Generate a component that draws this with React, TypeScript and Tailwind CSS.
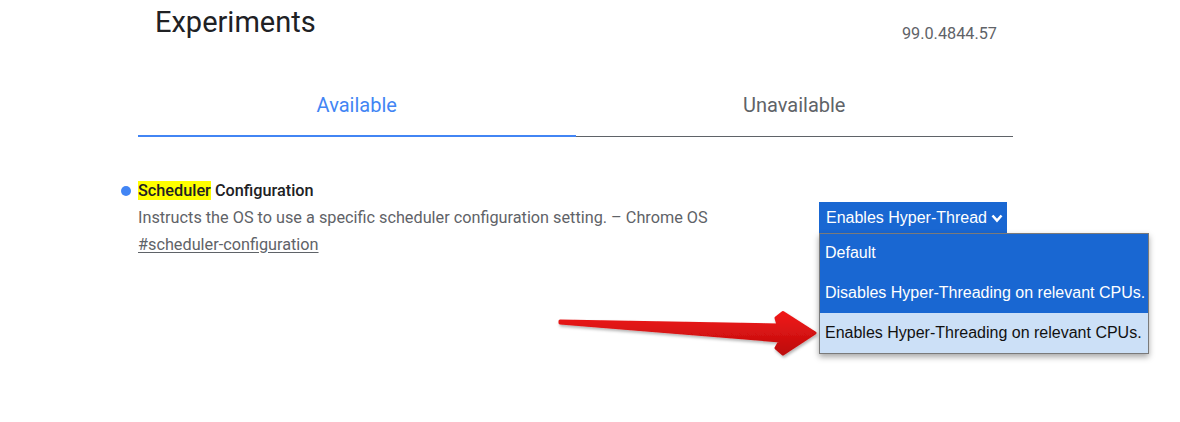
import React from "react";

export default function App() {
  return (
    <div
      className="relative w-[1180px] h-[422px] overflow-hidden bg-white"
      style={{ fontFamily: "Roboto, 'Noto Sans', sans-serif" }}
    >
      <div className="ml-[138px] w-[875px]">
        {/* Header */}
        <div className="flex items-start justify-between">
          <h1 className="pl-[17px] pt-[4px] text-[29px] leading-[36px] font-normal text-[#202124]">
            Experiments
          </h1>
          <div className="mt-[24px] pr-[16px] text-[16.25px] leading-[20px] text-[#5f6368]">
            99.0.4844.57
          </div>
        </div>

        {/* Tabs */}
        <div className="mt-[38px] flex">
          <div className="flex-1 border-b-2 border-[#4285f4] pt-[11px] pb-[18px] text-center text-[20px] leading-[24px] text-[#4285f4]">
            Available
          </div>
          <div className="flex-1 border-b border-[#5f6368] pt-[11px] pb-[19px] text-center text-[20px] leading-[24px] text-[#5f6368]">
            Unavailable
          </div>
        </div>

        {/* Experiment row */}
        <div className="mt-[44px] flex justify-between">
          <div className="flex flex-col">
            <div className="flex items-center text-[16.25px] leading-[20px] font-medium text-[#202124]">
              <span className="-ml-[17px] mr-[7px] inline-block h-[10px] w-[10px] rounded-full bg-[#4285f4]" />
              <span>
                <mark className="bg-[#ffff00] text-[#202124]">Scheduler</mark> Configuration
              </span>
            </div>
            <div className="mt-[7px] text-[16.25px] leading-[20px] text-[#5f6368]">
              Instructs the OS to use a specific scheduler configuration setting. – Chrome OS
            </div>
            <div className="mt-[7px] text-[16.25px] leading-[20px] text-[#5f6368] underline underline-offset-2">
              #scheduler-configuration
            </div>
          </div>

          <div className="relative mr-[6px] pt-[21px]">
            <div
              className="flex h-[32px] w-[188px] items-center justify-between bg-[#1967d2] pl-[7px] pr-[4px] text-[16px] text-white"
              style={{ fontFamily: "'Liberation Sans', Arial, sans-serif" }}
            >
              <span className="overflow-hidden whitespace-nowrap">Enables Hyper-Thread</span>
              <svg width="12" height="9" viewBox="0 0 12 9" className="shrink-0">
                <path d="M1.5 1.5 L6 6.5 L10.5 1.5" fill="none" stroke="white" strokeWidth="2.6" />
              </svg>
            </div>
            <div
              className="absolute left-0 top-[52px] z-10 w-[330px] border border-[#7a7a7a] bg-[#1967d2] text-[16px] whitespace-nowrap shadow-[0_3px_6px_rgba(0,0,0,0.35)]"
              style={{ fontFamily: "'Liberation Sans', Arial, sans-serif" }}
            >
              <div className="flex h-[38px] items-center px-[5px] text-white">Default</div>
              <div className="flex h-[41px] items-center px-[5px] text-white">
                Disables Hyper-Threading on relevant CPUs.
              </div>
              <div className="flex h-[40px] items-center bg-[#cce0f7] px-[5px] text-[#111]">
                Enables Hyper-Threading on relevant CPUs.
              </div>
            </div>
          </div>
        </div>
      </div>

      {/* Annotation arrow */}
      <svg
        className="pointer-events-none absolute left-0 top-0"
        width="1180"
        height="422"
        viewBox="0 0 1180 422"
      >
        <defs>
          <linearGradient id="arrowRed" x1="0" y1="0" x2="0" y2="1">
            <stop offset="0" stopColor="#f01818" />
            <stop offset="1" stopColor="#bd0c0c" />
          </linearGradient>
          <filter id="arrowShadow" x="-10%" y="-30%" width="120%" height="160%">
            <feDropShadow dx="1" dy="2" stdDeviation="1.5" floodColor="#000" floodOpacity="0.3" />
          </filter>
        </defs>
        <polygon
          points="560,321 778,325 776,318 783,312.5 815,333 783,354 776,348 780,341 560,323"
          fill="url(#arrowRed)"
          stroke="url(#arrowRed)"
          strokeWidth="3"
          strokeLinejoin="round"
          filter="url(#arrowShadow)"
        />
      </svg>
    </div>
  );
}
